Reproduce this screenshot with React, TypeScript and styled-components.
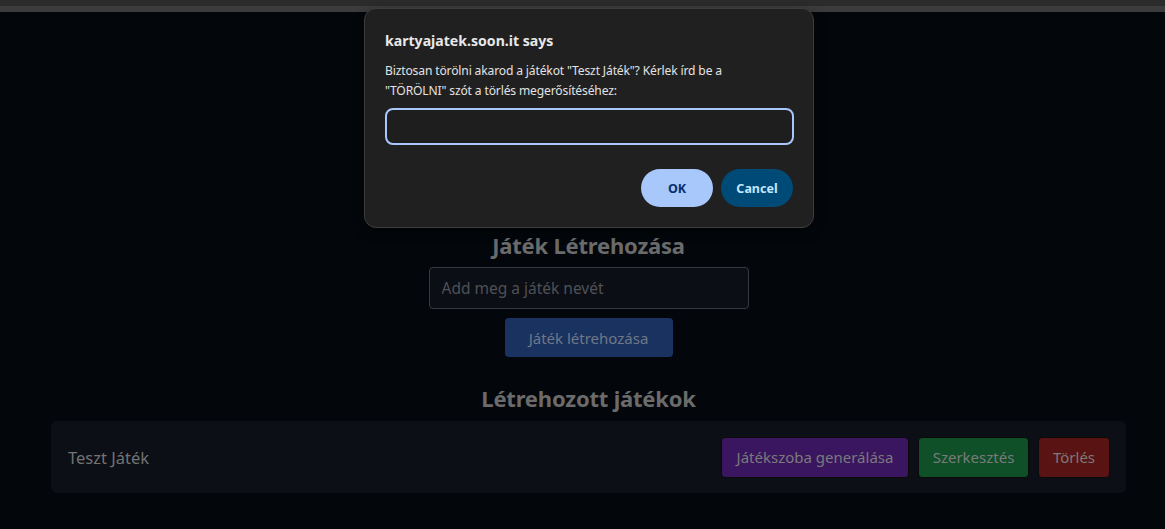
import React from "react";
import styled, { createGlobalStyle } from "styled-components";

const Global = createGlobalStyle`
  html, body { margin: 0; padding: 0; background: #03070b; }
  body { font-family: "Noto Sans", "Open Sans", Arial, sans-serif; width: 1165px; height: 529px; overflow: hidden; }
  * { box-sizing: border-box; }
`;

const Page = styled.div`
  position: relative;
  width: 1165px;
  height: 529px;
  background: #03070b;
`;

const TopBar = styled.div`
  height: 12px;
  background: #2b2b2b;
  border-bottom: 6px solid #3c3c3c;
`;

const Main = styled.main`
  display: flex;
  flex-direction: column;
  align-items: center;
  padding: 218px 39px 0 51px;
`;

const Heading = styled.h2<{ $mt?: number }>`
  margin: ${(p) => p.$mt ?? 0}px 0 0;
  font-size: 22px;
  font-weight: 700;
  line-height: 30px;
  color: #6b6b6b;
  letter-spacing: -0.2px;
`;

const NameInput = styled.input`
  margin-top: 7px;
  width: 320px;
  height: 42px;
  padding: 0 12px;
  background: #0b0e14;
  border: 1px solid #38393c;
  border-radius: 4px;
  font-family: inherit;
  font-size: 15.5px;
  color: #777;
  outline: none;
  &::placeholder { color: #4f5156; }
`;

const CreateButton = styled.button`
  margin-top: 9px;
  width: 168px;
  height: 39px;
  border: none;
  border-radius: 4px;
  background: #1a325f;
  color: #6f7888;
  font-family: inherit;
  font-size: 15px;
  cursor: pointer;
`;

const Card = styled.div`
  margin-top: 8px;
  align-self: stretch;
  height: 72px;
  display: flex;
  align-items: center;
  justify-content: space-between;
  padding: 0 16px 0 17px;
  background: #0c0f16;
  border-radius: 6px;
`;

const GameName = styled.span`
  font-size: 16.5px;
  color: #737373;
`;

const Actions = styled.div`
  display: flex;
  gap: 9px;
`;

const ActionButton = styled.button<{ $bg: string; $w: number }>`
  height: 41px;
  width: ${(p) => p.$w}px;
  border: 1px solid #0a0a0a;
  border-radius: 4px;
  background: ${(p) => p.$bg};
  color: #7a7a7a;
  font-family: inherit;
  font-size: 15px;
  cursor: pointer;
`;

const Dialog = styled.div`
  position: absolute;
  left: 364px;
  top: 8px;
  width: 450px;
  height: 220px;
  background: #202020;
  border: 1px solid #3d3d3d;
  border-radius: 12px;
  padding: 22px 20px 0 20px;
  display: flex;
  flex-direction: column;
  box-shadow: 0 4px 12px rgba(0, 0, 0, 0.4);
`;

const DialogTitle = styled.div`
  font-family: "Noto Sans", sans-serif;
  font-size: 14.1px;
  font-weight: 700;
  color: #e8e8e8;
  line-height: 20px;
`;

const DialogText = styled.div`
  margin-top: 10px;
  font-family: "Noto Sans", sans-serif;
  font-size: 12.1px;
  color: #e3e3e3;
  line-height: 20px;
  letter-spacing: -0.15px;
`;

const DialogInput = styled.input`
  margin-top: 7px;
  height: 37px;
  width: 409px;
  background: #1e1e1e;
  border: 2px solid #a8c7fa;
  border-radius: 8px;
  outline: none;
  color: #e3e3e3;
  padding: 0 10px;
`;

const DialogButtons = styled.div`
  margin-top: 24px;
  display: flex;
  justify-content: flex-end;
  gap: 8px;
`;

const PillButton = styled.button<{ $primary?: boolean }>`
  width: 72px;
  height: 38px;
  border-radius: 19px;
  border: none;
  background: ${(p) => (p.$primary ? "#a8c7fa" : "#004a77")};
  color: ${(p) => (p.$primary ? "#062e6f" : "#c2e7ff")};
  font-family: "Noto Sans", sans-serif;
  font-size: 12.5px;
  font-weight: 700;
  cursor: pointer;
`;

export default function App() {
  return (
    <Page>
      <Global />
      <TopBar />
      <Main>
        <Heading>Játék Létrehozása</Heading>
        <NameInput placeholder="Add meg a játék nevét" />
        <CreateButton>Játék létrehozása</CreateButton>
        <Heading $mt={26}>Létrehozott játékok</Heading>
        <Card>
          <GameName>Teszt Játék</GameName>
          <Actions>
            <ActionButton $bg="#3b1660" $w={188}>Játékszoba generálása</ActionButton>
            <ActionButton $bg="#0f5029" $w={111}>Szerkesztés</ActionButton>
            <ActionButton $bg="#5a1313" $w={72}>Törlés</ActionButton>
          </Actions>
        </Card>
      </Main>
      <Dialog role="dialog">
        <DialogTitle>kartyajatek.soon.it says</DialogTitle>
        <DialogText>
          Biztosan törölni akarod a játékot "Teszt Játék"? Kérlek írd be a
          <br />
          "TÖRÖLNI" szót a törlés megerősítéséhez:
        </DialogText>
        <DialogInput />
        <DialogButtons>
          <PillButton $primary>OK</PillButton>
          <PillButton>Cancel</PillButton>
        </DialogButtons>
      </Dialog>
    </Page>
  );
}
